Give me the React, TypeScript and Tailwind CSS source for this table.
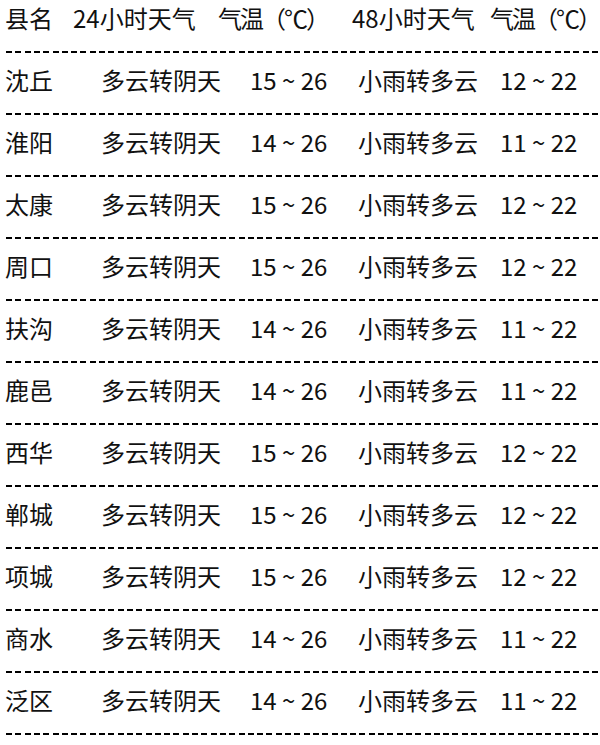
const rows: Array<[string, string, string, string, string]> = [
  ['沈丘', '多云转阴天', '15 ~ 26', '小雨转多云', '12 ~ 22'],
  ['淮阳', '多云转阴天', '14 ~ 26', '小雨转多云', '11 ~ 22'],
  ['太康', '多云转阴天', '15 ~ 26', '小雨转多云', '12 ~ 22'],
  ['周口', '多云转阴天', '15 ~ 26', '小雨转多云', '12 ~ 22'],
  ['扶沟', '多云转阴天', '14 ~ 26', '小雨转多云', '11 ~ 22'],
  ['鹿邑', '多云转阴天', '14 ~ 26', '小雨转多云', '11 ~ 22'],
  ['西华', '多云转阴天', '15 ~ 26', '小雨转多云', '12 ~ 22'],
  ['郸城', '多云转阴天', '15 ~ 26', '小雨转多云', '12 ~ 22'],
  ['项城', '多云转阴天', '15 ~ 26', '小雨转多云', '12 ~ 22'],
  ['商水', '多云转阴天', '14 ~ 26', '小雨转多云', '11 ~ 22'],
  ['泛区', '多云转阴天', '14 ~ 26', '小雨转多云', '11 ~ 22'],
];

// dashed rule under every row
function Dashes() {
  return (
    <div className="h-[26px] pl-[6px] pt-[15px]">
      <div className="h-[2px] w-full bg-[repeating-linear-gradient(to_right,#000_0_6px,transparent_6px_9.3px)]" />
    </div>
  );
}

export default function App() {
  return (
    <div
      className="w-[600px] bg-white text-[24px] leading-[36px] text-[#111]"
      style={{ fontFamily: '"Noto Sans CJK SC", "Noto Sans", sans-serif' }}
    >
      <div className="flex whitespace-nowrap pl-[5px]">
        <span className="w-[68px]">县名</span>
        <span className="w-[145px]">24小时天气</span>
        <span className="w-[134px] tracking-[-2px]">气温（℃）</span>
        <span className="w-[138px]">48小时天气</span>
        <span className="tracking-[-2px]">气温（℃）</span>
      </div>
      <Dashes />

      {rows.map(([county, w24, t24, w48, t48]) => (
        <div key={county}>
          <div className="flex whitespace-pre pl-[5px]">
            <span className="w-[96px]">{county}</span>
            <span className="w-[149px]">{w24}</span>
            <span className="w-[108px]">{t24}</span>
            <span className="w-[142px]">{w48}</span>
            <span>{t48}</span>
          </div>
          <Dashes />
        </div>
      ))}
    </div>
  );
}
